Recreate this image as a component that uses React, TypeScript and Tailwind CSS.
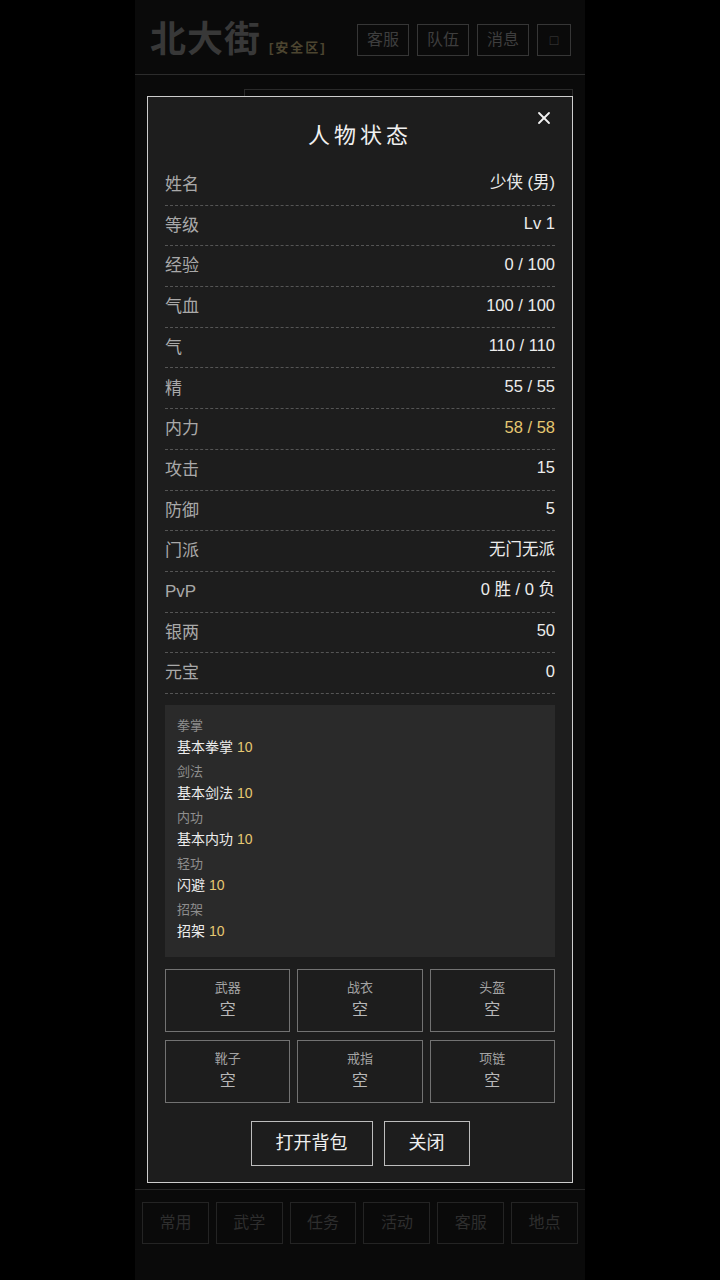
import { X } from 'lucide-react'

const FONT = '[font-family:"Liberation_Sans","Noto_Sans_CJK_SC",sans-serif]'

const STATS: { label: string; value: string; gold?: boolean }[] = [
  { label: '姓名', value: '少侠 (男)' },
  { label: '等级', value: 'Lv 1' },
  { label: '经验', value: '0 / 100' },
  { label: '气血', value: '100 / 100' },
  { label: '气', value: '110 / 110' },
  { label: '精', value: '55 / 55' },
  { label: '内力', value: '58 / 58', gold: true },
  { label: '攻击', value: '15' },
  { label: '防御', value: '5' },
  { label: '门派', value: '无门无派' },
  { label: 'PvP', value: '0 胜 / 0 负' },
  { label: '银两', value: '50' },
  { label: '元宝', value: '0' },
]

const SKILLS = [
  { cat: '拳掌', name: '基本拳掌', lv: 10 },
  { cat: '剑法', name: '基本剑法', lv: 10 },
  { cat: '内功', name: '基本内功', lv: 10 },
  { cat: '轻功', name: '闪避', lv: 10 },
  { cat: '招架', name: '招架', lv: 10 },
]

const SLOTS = ['武器', '战衣', '头盔', '靴子', '戒指', '项链']
const TOP_BTNS = ['客服', '队伍', '消息']
const NAV = ['常用', '武学', '任务', '活动', '客服', '地点']

export default function App() {
  return (
    <div className={`min-h-screen w-full bg-black ${FONT}`}>
      <div className="relative mx-auto flex min-h-screen w-[450px] flex-col bg-[#0a0a0a]">
        {/* header (dimmed behind the overlay) */}
        <div className="flex h-[75px] items-center justify-between border-b border-[#2c2c2c] pl-[15px] pr-[14px] pt-[6px]">
          <div className="flex items-baseline gap-[8px]">
            <span className="text-[36px] font-bold leading-none tracking-[1px] text-[#383838]">北大街</span>
            <span className="text-[13px] font-bold tracking-[2px] text-[#4c4530]">[安全区]</span>
          </div>
          <div className="flex items-center gap-[8px]">
            {TOP_BTNS.map((b) => (
              <div key={b} className="flex h-[32px] w-[52px] items-center justify-center border border-[#363636] text-[16px] text-[#3e3e3e]">
                {b}
              </div>
            ))}
            <div className="flex h-[32px] w-[34px] items-center justify-center border border-[#363636] text-[14px] text-[#3e3e3e]">□</div>
          </div>
        </div>

        {/* dimmed content behind modal */}
        <div className="flex flex-1 pl-[109px] pr-[12px] pt-[14px]">
          <div className="h-[1080px] w-full border border-[#2a2a2a]" />
        </div>

        {/* bottom nav */}
        <div className="flex h-[91px] gap-[7px] border-t border-[#262626] px-[7px] pt-[12px]">
          {NAV.map((n) => (
            <div key={n} className="flex h-[42px] flex-1 items-center justify-center border border-[#242424] text-[16px] text-[#2e2e2e]">
              {n}
            </div>
          ))}
        </div>

        {/* modal */}
        <div className="absolute left-[12px] top-[96px] w-[426px] border border-[#cdcdcd] bg-[#1d1d1d] px-[17px] pb-[16px] pt-[22px]">
          <button className="absolute right-[18px] top-[11px] text-[#f2f2f2]">
            <X size={20} strokeWidth={2.2} />
          </button>
          <div className="mb-[14px] h-[32px] text-center text-[22px] leading-[34px] tracking-[4px] text-[#f0f0f0]">人物状态</div>

          <div className="flex flex-col">
            {STATS.map((s) => (
              <div key={s.label} className="flex h-[40.7px] items-center justify-between border-b border-dashed border-[#555555]">
                <span className="text-[17px] text-[#a9a9a9]">{s.label}</span>
                <span className={`mb-[4px] text-[16.5px] ${s.gold ? 'text-[#e6c872]' : 'text-[#ececec]'}`}>{s.value}</span>
              </div>
            ))}
          </div>

          <div className="mt-[11px] bg-[#2a2a2a] px-[12px] pb-[15px] pt-[11px]">
            {SKILLS.map((k, i) => (
              <div key={k.cat} className={i < SKILLS.length - 1 ? 'mb-[4px]' : ''}>
                <div className="text-[13px] leading-[20px] text-[#8e8e8e]">{k.cat}</div>
                <div className="text-[14px] leading-[22px] text-[#ededed]">
                  {k.name} <span className="text-[#e6c872]">{k.lv}</span>
                </div>
              </div>
            ))}
          </div>

          <div className="mt-[12px] grid grid-cols-3 gap-x-[7px] gap-y-[8px]">
            {SLOTS.map((s) => (
              <div key={s} className="flex h-[63px] flex-col items-center justify-center border border-[#727272]">
                <span className="text-[13px] leading-[20px] text-[#a3a3a3]">{s}</span>
                <span className="text-[16px] leading-[24px] text-[#b8b8b8]">空</span>
              </div>
            ))}
          </div>

          <div className="mt-[18px] flex justify-center gap-[11px]">
            <button className="h-[45px] border border-[#bdbdbd] px-[24px] text-[18px] text-[#efefef]">打开背包</button>
            <button className="h-[45px] border border-[#bdbdbd] px-[24px] text-[18px] text-[#efefef]">关闭</button>
          </div>
        </div>
      </div>
    </div>
  )
}
